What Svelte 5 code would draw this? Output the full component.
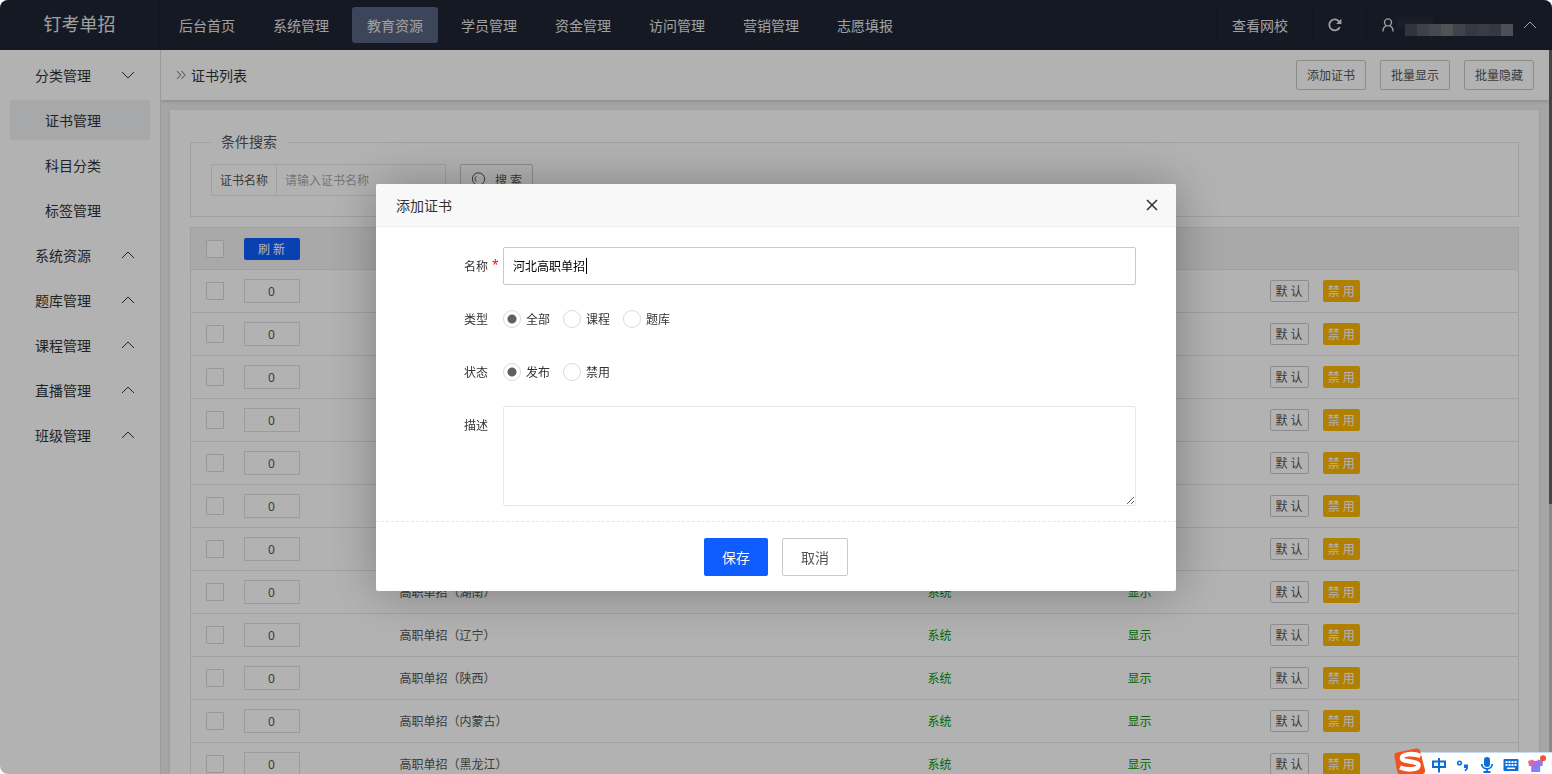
<script lang="ts">
  const navItems = ["后台首页", "系统管理", "教育资源", "学员管理", "资金管理", "访问管理", "营销管理", "志愿填报"];
  const subMenu = ["证书管理", "科目分类", "标签管理"];
  const menuGroups = ["系统资源", "题库管理", "课程管理", "直播管理", "班级管理"];
  const toolbar = ["添加证书", "批量显示", "批量隐藏"];

  const rows = [
    "高职单招",
    "高职单招",
    "高职单招",
    "高职单招",
    "高职单招",
    "高职单招",
    "高职单招",
    "高职单招（湖南）",
    "高职单招（辽宁）",
    "高职单招（陕西）",
    "高职单招（内蒙古）",
    "高职单招（黑龙江）"
  ];

  // masked account name in the header
  const maskColors = ["#484b58", "#5b5d68", "#656974", "#72777c", "#5c606c", "#52505f", "#525768", "#4d505f", "#716f7c"];

  let activeNav = $state("教育资源");
  let activeSub = $state("证书管理");
  let showDialog = $state(true);
  let name = $state("河北高职单招");
  let type = $state("全部");
  let status = $state("发布");
  let description = $state("");
</script>

{#snippet chevron(down: boolean)}
  <svg class="chevron" class:down width="14" height="8" viewBox="0 0 14 8" aria-hidden="true">
    <path d="M1 7 L7 1 L13 7" fill="none" stroke="currentColor" />
  </svg>
{/snippet}

<div class="app">
  <header class="header">
    <div class="logo">钉考单招</div>
    <nav class="nav">
      {#each navItems as item}
        <a href="#top" class:active={activeNav === item} onclick={() => (activeNav = item)}>{item}</a>
      {/each}
    </nav>
    <div class="header-right">
      <a class="cell" href="#site">查看网校</a>
      <button class="cell refresh" aria-label="刷新">
        <svg width="14" height="14" viewBox="0 0 14 14">
          <path d="M11.8 9.2 A5.5 5.5 0 1 1 11.2 3.6" fill="none" stroke="currentColor" stroke-width="1.8" />
          <path d="M13.4 0.8 V6 H8.2 Z" fill="currentColor" />
        </svg>
      </button>
      <button class="cell user" aria-label="账号">
        <svg width="12" height="14" viewBox="0 0 12 14">
          <circle cx="6" cy="4.4" r="3.5" fill="none" stroke="currentColor" stroke-width="1.4" />
          <path d="M0.9 13.5 C1 10.2 2.6 8.3 4.6 7.6 M7.4 7.6 C9.4 8.3 11 10.2 11.1 13.5" fill="none" stroke="currentColor" stroke-width="1.4" />
        </svg>
        <svg class="mask" width="116" height="22" viewBox="0 0 116 22">
          <rect x="0" y="3" width="36" height="12" fill="#262938" />
          <rect x="36" y="5" width="80" height="6" fill="#20232f" />
          {#each maskColors as color, i}
            <rect x={8 + i * 12} y="10" width="12" height="12" fill={color} />
          {/each}
        </svg>
        {@render chevron(false)}
      </button>
    </div>
  </header>

  <div class="layout">
    <aside class="sidebar">
      <button class="menu-item">分类管理 {@render chevron(true)}</button>
      {#each subMenu as item}
        <button class="menu-item sub" class:active={activeSub === item} onclick={() => (activeSub = item)}>{item}</button>
      {/each}
      {#each menuGroups as item}
        <button class="menu-item">{item} {@render chevron(false)}</button>
      {/each}
    </aside>

    <main class="main">
      <div class="crumb-bar">
        <svg width="10" height="10" viewBox="0 0 10 10" aria-hidden="true">
          <path d="M1 1 L4.6 5 L1 9 M5.4 1 L9 5 L5.4 9" fill="none" stroke="#888" stroke-width="1.1" />
        </svg>
        <span class="crumb">证书列表</span>
        {#each toolbar as label}
          <button class="btn" onclick={() => (showDialog = true)}>{label}</button>
        {/each}
      </div>

      <section class="card">
        <fieldset class="search">
          <legend>条件搜索</legend>
          <div class="search-row">
            <div class="input-group">
              <label for="keyword">证书名称</label>
              <input id="keyword" type="text" placeholder="请输入证书名称" />
            </div>
            <button class="btn btn-search">
              <svg width="16" height="16" viewBox="0 0 16 16" aria-hidden="true">
                <circle cx="7.5" cy="7" r="6.2" fill="none" stroke="currentColor" />
                <path d="M5.4 4.2 A3.6 3.6 0 0 0 5.4 9.8 M11.8 11.6 L15 15" fill="none" stroke="currentColor" />
              </svg>
              搜 索
            </button>
          </div>
        </fieldset>

        <table class="table">
          <colgroup>
            <col class="col-check" />
            <col class="col-sort" />
            <col />
            <col class="col-type" />
            <col class="col-status" />
            <col class="col-ops" />
          </colgroup>
          <thead>
            <tr>
              <th><input type="checkbox" aria-label="全选" /></th>
              <th><button class="btn-refresh">刷 新</button></th>
              <th></th>
              <th></th>
              <th></th>
              <th></th>
            </tr>
          </thead>
          <tbody>
            {#each rows as row}
              <tr>
                <td><input type="checkbox" aria-label={row} /></td>
                <td><input class="sort" type="text" value="0" aria-label="排序" /></td>
                <td class="name">{row}</td>
                <td class="green">系统</td>
                <td class="green">显示</td>
                <td>
                  <div class="ops">
                    <button class="btn-xs">默 认</button>
                    <button class="btn-xs warm">禁 用</button>
                  </div>
                </td>
              </tr>
            {/each}
          </tbody>
        </table>
      </section>
    </main>
    <div class="scrollbar"></div>
  </div>

  {#if showDialog}
    <div class="shade">
      <div class="dialog" role="dialog" aria-labelledby="dialog-title">
        <div class="dialog-title">
          <span id="dialog-title">添加证书</span>
          <button class="close" aria-label="关闭" onclick={() => (showDialog = false)}>
            <svg width="12" height="12" viewBox="0 0 12 12">
              <path d="M1 1 L11 11 M11 1 L1 11" stroke="#2e2d3c" stroke-width="1.5" />
            </svg>
          </button>
        </div>
        <form onsubmit={(e) => e.preventDefault()}>
          <div class="fields">
            <div class="field">
              <label class="field-label required" for="cert-name">名称</label>
              <div class="name-box">
                <input id="cert-name" type="text" bind:value={name} />
                <span class="caret"></span>
              </div>
            </div>
            <div class="field" role="radiogroup" aria-labelledby="type-label">
              <span class="field-label" id="type-label">类型</span>
              <div class="radios">
                {#each ["全部", "课程", "题库"] as option}
                  <label><input type="radio" name="type" value={option} bind:group={type} />{option}</label>
                {/each}
              </div>
            </div>
            <div class="field" role="radiogroup" aria-labelledby="status-label">
              <span class="field-label" id="status-label">状态</span>
              <div class="radios">
                {#each ["发布", "禁用"] as option}
                  <label><input type="radio" name="status" value={option} bind:group={status} />{option}</label>
                {/each}
              </div>
            </div>
            <div class="field">
              <label class="field-label" for="cert-desc">描述</label>
              <textarea id="cert-desc" bind:value={description}></textarea>
            </div>
          </div>
          <div class="dialog-footer">
            <button class="save" type="submit">保存</button>
            <button class="cancel" type="button" onclick={() => (showDialog = false)}>取消</button>
          </div>
        </form>
      </div>
    </div>
  {/if}

  <div class="ime">
    <svg class="ime-logo" width="32" height="26" viewBox="0 0 32 26" aria-hidden="true">
      <path d="M3 4.5 L22 0.6 Q25.500 0 26.200 3 L31 22 Q31.500 26 28 26 H5 Q3.500 26 3 23 L0.500 8 Q0 5 3 4.500 Z" fill="#f0531f" />
      <path d="M26.500 8 C20 5 8 5.500 8 10 C8 14.500 25 12.500 24.500 17.500 C24 22.500 12 22 6 19.500" fill="none" stroke="#fff" stroke-width="4.600" />
    </svg>
    <svg width="16" height="16" viewBox="0 0 16 16" aria-hidden="true">
      <path d="M2 4.500 H14 V10 H2 Z M8 1 V15.500" fill="none" stroke="#0a6fd8" stroke-width="2" />
    </svg>
    <svg width="16" height="16" viewBox="0 0 16 16" aria-hidden="true">
      <circle cx="4.500" cy="6" r="1.800" fill="none" stroke="#0a6fd8" stroke-width="1.600" />
      <path d="M9 7.500 H13 V11 Q12.500 13.500 10 14.500 L9.500 13 Q11 12.200 11 11 H9 Z" fill="#0a6fd8" />
    </svg>
    <svg width="16" height="16" viewBox="0 0 16 16" aria-hidden="true">
      <rect x="5" y="0" width="6" height="10" rx="3" fill="#0a6fd8" />
      <path d="M2.700 7 C3 13.500 13 13.500 13.300 7 M8 12 V15 M4.500 15 H11.500" fill="none" stroke="#0a6fd8" stroke-width="1.800" />
    </svg>
    <svg width="16" height="16" viewBox="0 0 16 16" aria-hidden="true">
      <rect x="0.500" y="2" width="15" height="12" rx="1" fill="#0a6fd8" />
      <path d="M2.500 5 H14 M2.500 8 H14" stroke="#fff" stroke-width="1.800" stroke-dasharray="2 1" />
      <path d="M4 11.300 H12" stroke="#fff" stroke-width="1.500" />
    </svg>
    <svg width="20" height="20" viewBox="0 0 20 20" aria-hidden="true">
      <defs>
        <linearGradient id="shirt" x1="0" y1="0" x2="1" y2="1">
          <stop offset="0" stop-color="#ff6a6a" />
          <stop offset="0.500" stop-color="#a070f0" />
          <stop offset="1" stop-color="#4aa0ff" />
        </linearGradient>
      </defs>
      <path d="M1 6 L5.500 4.500 Q8.500 7.500 11.500 4.500 L16 6 L15.500 11 H13.200 V17 H4.200 V11 H2 Z" fill="url(#shirt)" />
      <circle cx="16" cy="3.200" r="3" fill="#f4503c" />
    </svg>
  </div>
</div>

<style>
  :global(body) {
    background: #fff;
    overflow: hidden;
  }

  * {
    box-sizing: border-box;
  }

  .app {
    height: 100vh;
    display: flex;
    flex-direction: column;
    overflow: hidden;
    border-radius: 8px;
    font-family: "Noto Sans", "Noto Sans CJK SC", sans-serif;
    font-size: 12px;
    color: #555;
  }

  button,
  input,
  textarea {
    margin: 0;
    padding: 0;
    border: none;
    background: none;
    font-family: inherit;
    font-size: inherit;
    color: inherit;
  }

  button {
    cursor: pointer;
    white-space: nowrap;
  }

  .header {
    flex: none;
    display: flex;
    height: 50px;
    background: #1e2433;
    color: #e6e6e6;
    font-size: 14px;
  }

  .logo {
    width: 160px;
    line-height: 48px;
    text-align: center;
    font-size: 18px;
    border-right: 1px solid #1a1f2c;
  }

  .nav {
    display: flex;
    align-items: center;
    gap: 8px;
    padding-left: 4px;
  }

  .nav a {
    height: 36px;
    padding: 0 15px;
    line-height: 38px;
    border-radius: 3px;
    color: inherit;
    text-decoration: none;
  }

  .nav a.active {
    background: #566481;
  }

  .header-right {
    display: flex;
    align-items: center;
    margin-left: auto;
  }

  .cell {
    display: flex;
    align-items: center;
    height: 34px;
    padding: 0 15px;
    border-left: 1px solid #1a1f2c;
    color: inherit;
    text-decoration: none;
  }

  a.cell {
    padding-right: 24px;
  }

  .refresh {
    padding-right: 24px;
  }

  .user {
    padding-right: 15px;
  }

  .mask {
    margin-left: 3px;
    margin-right: 10px;
  }

  .chevron {
    flex: none;
  }

  .chevron.down {
    transform: rotate(180deg);
  }

  .layout {
    flex: 1;
    min-height: 0;
    display: flex;
  }

  .sidebar {
    flex: none;
    width: 161px;
    padding: 5px 10px;
    display: flex;
    flex-direction: column;
    gap: 5px;
    background: #fff;
    border-right: 1px solid #dedede;
  }

  .menu-item {
    display: flex;
    align-items: center;
    justify-content: space-between;
    height: 40px;
    padding: 0 15px 1px 25px;
    font-size: 14px;
    color: #333;
  }

  .menu-item.sub {
    padding-left: 35px;
  }

  .menu-item.active {
    background: #eff1f4;
  }

  .main {
    flex: 1;
    min-width: 0;
    overflow: hidden;
    background: #ededed;
  }

  .crumb-bar {
    display: flex;
    align-items: center;
    gap: 14px;
    height: 50px;
    padding: 0 15px;
    background: #fff;
    box-shadow: 0 1px 4px rgba(0, 0, 0, 0.2);
  }

  .crumb {
    margin-left: -9px;
    margin-right: auto;
    font-size: 14px;
    color: #333;
  }

  .btn {
    height: 30px;
    padding: 0 10px;
    border: 1px solid #c9c9c9;
    border-radius: 2px;
    color: #555;
  }

  .card {
    margin: 10px 10px 0 9px;
    padding: 20px;
    background: #fff;
    box-shadow: 0 1px 3px rgba(0, 0, 0, 0.1);
  }

  .search {
    margin: 0 0 10px;
    padding: 10px 20px 20px;
    border: 1px solid #e6e6e6;
  }

  .search legend {
    padding: 0 10px;
    line-height: 24px;
    font-size: 14px;
  }

  .search-row {
    display: flex;
    gap: 14px;
  }

  .input-group {
    display: flex;
    width: 235px;
    height: 32px;
    border: 1px solid #e6e6e6;
    border-radius: 2px;
  }

  .input-group label {
    padding: 0 8px;
    line-height: 32px;
    border-right: 1px solid #e6e6e6;
  }

  .input-group input {
    flex: 1;
    min-width: 0;
    padding: 0 8px;
  }

  .input-group input::placeholder {
    color: #aaa;
  }

  .btn-search {
    display: flex;
    align-items: center;
    gap: 8px;
    height: 32px;
  }

  .table {
    width: 100%;
    table-layout: fixed;
    border-collapse: collapse;
    border: 1px solid #e6e6e6;
  }

  .col-check {
    width: 48px;
  }

  .col-sort {
    width: 146px;
  }

  .col-type {
    width: 200px;
  }

  .col-status {
    width: 142px;
  }

  .col-ops {
    width: 264px;
  }

  th,
  td {
    height: 43px;
    padding: 0 0 0 15px;
    text-align: left;
    border-bottom: 1px solid #e6e6e6;
  }

  th {
    height: 42px;
    background: #f2f2f2;
  }

  th:nth-child(2),
  td:nth-child(2) {
    padding-left: 5px;
  }

  input[type="checkbox"] {
    appearance: none;
    display: block;
    width: 18px;
    height: 18px;
    border: 1px solid #d9d9d9;
    border-radius: 1px;
    background: #fff;
  }

  .btn-refresh {
    display: block;
    width: 56px;
    height: 22px;
    border-radius: 2px;
    background: #0f5cff;
    color: #fff;
    line-height: 24px;
  }

  .sort {
    display: block;
    width: 56px;
    height: 24px;
    border: 1px solid #e0e0e0;
    text-align: center;
  }

  .green {
    color: #009600;
  }

  .ops {
    display: flex;
    gap: 14px;
  }

  .btn-xs {
    height: 22px;
    padding: 1px 5px 0;
    border: 1px solid #c9c9c9;
    border-radius: 2px;
    line-height: 20px;
  }

  .btn-xs.warm {
    border: none;
    background: #ffb800;
    color: #fff;
  }

  .scrollbar {
    flex: none;
    width: 3px;
    background: linear-gradient(#636363 454px, #c4c4c4 454px);
  }

  .shade {
    position: fixed;
    inset: 0;
    display: flex;
    align-items: center;
    justify-content: center;
    padding-top: 1px;
    border-radius: 8px;
    background: rgba(0, 0, 0, 0.3);
  }

  .dialog {
    width: 800px;
    max-width: 100%;
    border-radius: 2px;
    background: #fff;
    box-shadow: 1px 1px 50px rgba(0, 0, 0, 0.3);
    color: #333;
  }

  .dialog-title {
    display: flex;
    align-items: center;
    justify-content: space-between;
    height: 43px;
    padding: 0 18px 0 20px;
    border-bottom: 1px solid #eee;
    border-radius: 2px 2px 0 0;
    background: #f8f8f8;
    font-size: 14px;
  }

  .close svg {
    display: block;
  }

  .fields {
    display: flex;
    flex-direction: column;
    gap: 15px;
    padding: 20px 40px 15px 0;
  }

  .field {
    display: flex;
    gap: 15px;
  }

  .field-label {
    flex: none;
    position: relative;
    width: 112px;
    height: 38px;
    line-height: 40px;
    text-align: right;
  }

  .field-label.required::after {
    content: "*";
    position: absolute;
    left: 116px;
    top: -2px;
    color: #f00;
  }

  .name-box {
    position: relative;
    flex: 1;
  }

  .name-box input {
    display: block;
    width: 100%;
    height: 38px;
    padding: 0 9px;
    border: 1px solid #c9c9c9;
    border-radius: 2px;
    color: #000;
    outline: none;
    caret-color: transparent;
  }

  .caret {
    position: absolute;
    left: 83px;
    top: 11px;
    width: 1px;
    height: 16px;
    background: #000;
  }

  .radios {
    display: flex;
    gap: 13px;
    height: 38px;
  }

  .radios label {
    display: flex;
    align-items: center;
    gap: 5px;
  }

  input[type="radio"] {
    appearance: none;
    width: 18px;
    height: 18px;
    border: 1px solid #d9d9d9;
    border-radius: 50%;
    background: #fff;
  }

  input[type="radio"]:checked {
    background: radial-gradient(circle, #5f5f5f 4px, #fff 5px);
  }

  textarea {
    display: block;
    flex: 1;
    height: 100px;
    padding: 6px 10px;
    border: 1px solid #e6e6e6;
    border-radius: 2px;
    resize: vertical;
  }

  .dialog-footer {
    display: flex;
    justify-content: center;
    gap: 14px;
    padding: 16px 0 15px;
    border-top: 1px dashed #e6e6e6;
    font-size: 14px;
  }

  .save,
  .cancel {
    height: 38px;
    padding: 0 18px;
    border-radius: 2px;
  }

  .save {
    background: #0f5cff;
    color: #fff;
  }

  .cancel {
    border: 1px solid #c9c9c9;
    color: #555;
  }

  .ime {
    position: fixed;
    right: 0;
    bottom: 0;
    display: flex;
    align-items: center;
    gap: 8px;
    height: 22px;
    padding: 2px 5px 0 37px;
    border-top: 1px solid #c9dcef;
    background: #fff;
    border-image: linear-gradient(to right, transparent 28px, #c9dcef 28px) 1;
    background: linear-gradient(to right, transparent 20px, #fff 20px);
  }

  .ime-logo {
    position: absolute;
    left: 0;
    bottom: 0;
  }
</style>
